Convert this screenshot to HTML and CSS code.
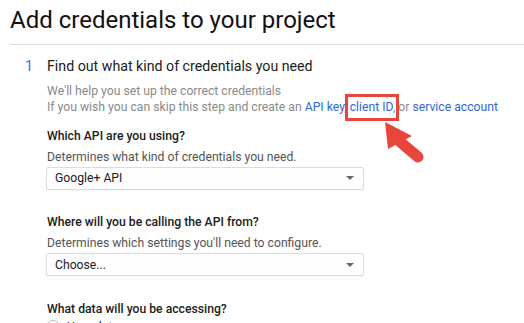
FILE: index.html
```html
<!DOCTYPE html>
<html lang="en">
<head>
    <meta charset="UTF-8">
    <title>Add credentials to your project</title>
    <link rel="stylesheet" href="styles.css">
</head>
<body>

<h1>Add credentials to your project</h1>

<div class="step">
    <div class="step-num">1</div>
    <div class="step-body">
        <h2>Find out what kind of credentials you need</h2>

        <p class="hint">
            We'll help you set up the correct credentials<br>
            If you wish you can skip this step and create an <a href="#">API key</a>, <span class="marked"><a href="#">client ID</a>,</span> or <a href="#">service account</a>
        </p>

        <div class="field first">
            <div class="label">Which API are you using?</div>
            <div class="desc">Determines what kind of credentials you need.</div>
            <div class="select">
                <span>Google+ API</span>
                <span class="caret"></span>
            </div>
        </div>

        <div class="field">
            <div class="label">Where will you be calling the API from?</div>
            <div class="desc">Determines which settings you'll need to configure.</div>
            <div class="select">
                <span>Choose...</span>
                <span class="caret"></span>
            </div>
        </div>

        <div class="field">
            <div class="label">What data will you be accessing?</div>
            <label class="radio"><span class="circle"></span>User data</label>
        </div>
    </div>
</div>

<!-- callout arrow pointing at the client ID link -->
<svg class="pointer" width="52" height="54" viewBox="0 0 52 54">
    <polygon points="7,7 10,34 34,21" fill="#e8453c"/>
    <line x1="20" y1="25" x2="40" y2="42" stroke="#e8453c" stroke-width="11" stroke-linecap="round"/>
</svg>

</body>
</html>
```

FILE: styles.css
```css
body {
    font-family: Roboto, "Liberation Sans", sans-serif;
    margin: 0;
    background: #fff;
    color: #212121;
    position: relative;
    height: 323px;
    overflow: hidden;
}
h1 {
    font-size: 24px;
    font-weight: 400;
    line-height: 27px;
    margin: 7px 0 0 10px;
    padding-bottom: 10px;
    border-bottom: 1px solid #ddd;
    color: #111;
}
.step {
    display: flex;
    margin-top: 11px;
}
.step-num {
    width: 47px;
    box-sizing: border-box;
    padding-left: 25px;
    font-size: 14.2px;
    line-height: 20px;
    color: #3f6ed8;
}
.step-body {
    flex: 1;
}
h2 {
    font-size: 14.2px;
    font-weight: 400;
    line-height: 20px;
    margin: 0;
    color: #212121;
}
.hint {
    margin: 7px 0 0;
    font-size: 12.2px;
    line-height: 16px;
    color: #8a8a8a;
}
.hint a {
    color: #3367d6;
    text-decoration: none;
}
.marked {
    position: relative;
}
.marked::after {
    content: "";
    position: absolute;
    left: -5px;
    right: -4px;
    top: -6px;
    bottom: -7px;
    border: 3px solid #e8453c;
}
.field {
    margin-top: 24.5px;
    font-size: 12.2px;
    line-height: 16px;
}
.field.first {
    margin-top: 12.5px;
}
.label {
    font-weight: 500;
    color: #212121;
}
.desc {
    margin-top: 5px;
    color: #555;
}
.select {
    display: flex;
    justify-content: space-between;
    align-items: center;
    box-sizing: border-box;
    width: 318px;
    height: 23px;
    margin-top: 2px;
    margin-left: -1px;
    padding: 0 9px 0 8px;
    border: 1px solid #dcdcdc;
    border-radius: 2px;
    background: #fdfdfd;
    box-shadow: 0 1px 1px rgba(0, 0, 0, 0.04);
    color: #222;
}
.caret {
    width: 0;
    height: 0;
    border-left: 4px solid transparent;
    border-right: 4px solid transparent;
    border-top: 4px solid #666;
}
.radio {
    display: flex;
    align-items: center;
    gap: 7px;
    margin-top: 2px;
    color: #212121;
}
.circle {
    width: 12px;
    height: 12px;
    border: 1px solid #bbb;
    border-radius: 50%;
    margin-left: -1px;
}
.pointer {
    position: absolute;
    left: 378px;
    top: 115px;
}
```
